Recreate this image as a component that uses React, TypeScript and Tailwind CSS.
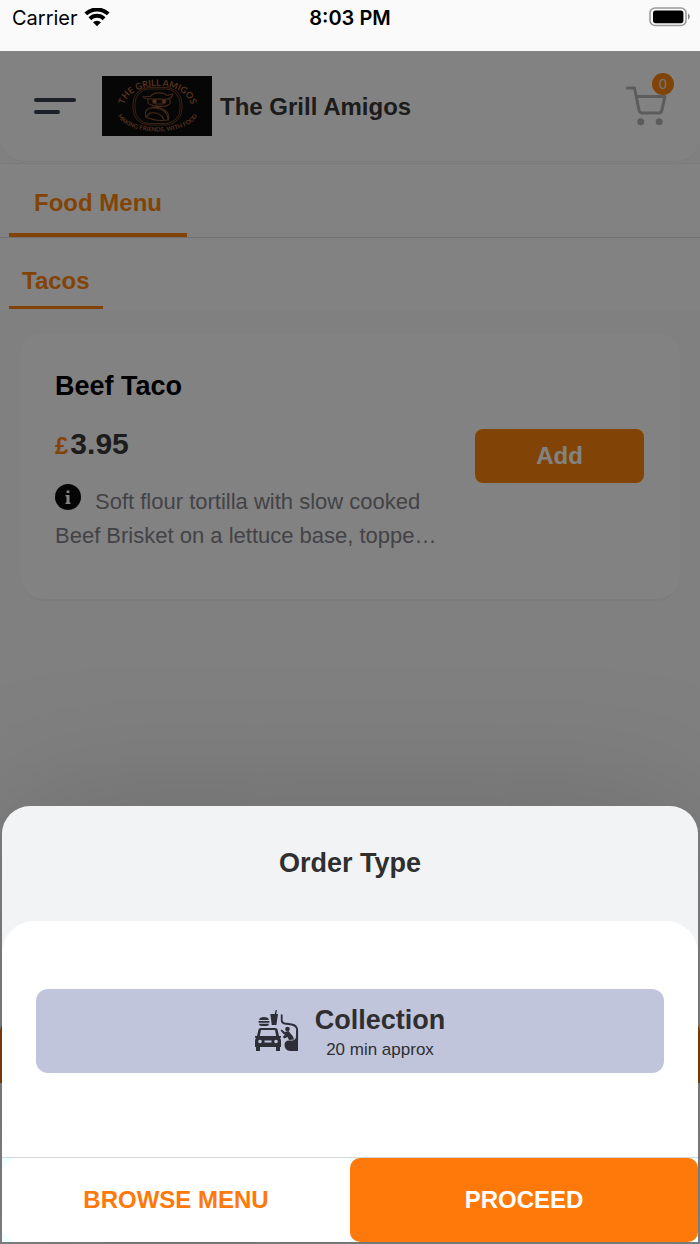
import { useState } from "react";

const sans = "font-['Liberation_Sans',Arial,sans-serif]";

function StatusBar() {
  return (
    <div className="grid h-[51px] grid-cols-3 items-start bg-[#fafafa] px-2.5 pt-1 font-['Inter',sans-serif] text-xl text-black">
      <div className="flex items-center gap-1.5 pl-0.5">
        <span>Carrier</span>
        <svg viewBox="0 0 26 20" className="h-5 w-[26px]" aria-hidden="true">
          <g fill="none" stroke="#000" strokeWidth="4">
            <path d="M1.8 5.900A16.400 16.400 0 0 1 24.200 5.900" />
            <path d="M5.900 10.700A10.200 10.200 0 0 1 20.100 10.700" />
          </g>
          <path d="M13 18.300 9 14.300A5.800 5.800 0 0 1 17 14.300Z" />
        </svg>
      </div>
      <div className="text-center font-semibold">8:03 PM</div>
      <div className="flex justify-end pt-[3px]">
        <svg viewBox="0 0 41 20" className="h-5 w-[41px]" aria-hidden="true">
          <rect x="1" y="1" width="36" height="17.500" rx="5" fill="none" stroke="#9b9b9b" strokeWidth="1.6" />
          <rect x="4" y="3.600" width="30.400" height="12.600" rx="2.6" />
          <path d="M39 6.500c2.400 1 2.400 5 0 6z" fill="#8b8b8b" />
        </svg>
      </div>
    </div>
  );
}

function Logo() {
  return (
    <svg viewBox="0 0 110 60" className="h-[60px] w-[110px] shrink-0" role="img" aria-label="The Grill Amigos logo">
      <rect width="110" height="60" fill="#0c0c0c" />
      <defs>
        <path id="logo-top" d="M22 31A33.500 21 0 0 1 89 31" />
        <path id="logo-bottom" d="M15 36A40.500 19.500 0 0 0 96 36" />
      </defs>
      <g fill="#a5603a" className="font-['Lato',sans-serif]">
        <text fontSize="9" fontWeight="700">
          <textPath href="#logo-top" startOffset="50%" textAnchor="middle">
            THE GRILL AMIGOS
          </textPath>
        </text>
        <text fontSize="6" fontWeight="700">
          <textPath href="#logo-bottom" startOffset="50%" textAnchor="middle">
            MAKING FRIENDS, WITH FOOD
          </textPath>
        </text>
      </g>
      <g fill="none" stroke="#8a5233" strokeWidth="0.8">
        <rect x="31" y="11.500" width="49" height="37.500" rx="16" />
        <rect x="33" y="13" width="45" height="34.500" rx="14.500" />
        <g strokeWidth="1.100">
          <path d="M41 21c3-1 6 0 8-1 2-4 14-4 15-1 2 1 4-1 7-1-1 4-5 6-11 5-8 0-17 1-19-2z" />
          <path d="M46 23c-1 4 1 6 4 6 2 2 14 2 16 0 3-1 3-4 1-7" />
          <path d="M44 41c-2-7 2-10 9-9 8 1 13 5 13 12-7 1-16 0-22-3z" />
          <path d="M49 32c7-2 17 1 18 9l-1 3M44 41l4-4c7-1 12 2 14 7" />
          <path d="M53 28h8M55 31v-2M58 31v-2" />
        </g>
        <circle cx="52.500" cy="25.500" r="2" fill="#a5603a" />
        <circle cx="62" cy="25.500" r="2" fill="#a5603a" />
      </g>
    </svg>
  );
}

function Header() {
  return (
    <header className="border-b border-[#f2f2f2] pb-px">
      <div className="flex h-[111px] items-center rounded-b-3xl border-b border-[#f2f2f2] bg-white px-8">
        <button type="button" aria-label="Open menu" className="ml-0.5 flex w-[42px] flex-col gap-2">
          <span className="h-1 w-[42px] rounded-full bg-[#3a3f51]" />
          <span className="h-1 w-[26px] rounded-full bg-[#3a3f51]" />
        </button>
        <div className="ml-[26px] flex items-center gap-2">
          <Logo />
          <h1 className="pt-px text-2xl font-bold text-[#383838]">The Grill Amigos</h1>
        </div>
        <button type="button" aria-label="Basket, 0 items" className="relative ml-auto">
          <svg viewBox="0 0 42 42" className="h-[42px] w-[42px]" aria-hidden="true">
            <path
              d="M1.500 3H8.500l4.500 22.300q.6 2.700 3.400 2.700h15.800q3 0 3.600-2.700L39 11.500H10.500"
              fill="none"
              stroke="#b4b4b4"
              strokeWidth="3"
              strokeLinecap="round"
              strokeLinejoin="round"
            />
            <circle cx="14.700" cy="36.700" r="3.500" fill="#b4b4b4" />
            <circle cx="33.200" cy="36.700" r="3.500" fill="#b4b4b4" />
          </svg>
          <span className="absolute -top-3 -right-1.5 flex size-[22px] items-center justify-center rounded-full bg-[#ff860c] text-sm text-[#e5e5e5]">
            0
          </span>
        </button>
      </div>
    </header>
  );
}

function Tabs() {
  return (
    <nav aria-label="Menu sections" className="bg-white text-2xl font-bold text-[#ff860c]">
      <div className="flex h-[74px] items-stretch border-b border-[#dadada] pl-[9px]">
        <a href="#food-menu" className="border-b-4 border-[#ff860c] px-[25px] pt-[23px]">
          Food Menu
        </a>
      </div>
      <div className="flex h-[71px] items-stretch pl-[9px]">
        <a href="#tacos" className="border-b-[3px] border-[#ff860c] px-[13px] pt-[27px]">
          Tacos
        </a>
      </div>
    </nav>
  );
}

function MenuItem() {
  return (
    <article className="mx-5 mt-6 flex items-start justify-between rounded-3xl border-b-2 border-[#f4f4f4] bg-white px-[35px] pt-[35px] pb-[46px]">
      <div className="w-[390px]">
        <h2 className="text-[27px] leading-9 font-bold text-black">Beef Taco</h2>
        <p className="mt-[22px] text-[30px] leading-9 font-bold text-[#383838]">
          <span className="mr-0.5 text-2xl text-[#ff860c]">£</span>3.95
        </p>
        <p className="mt-[22px] text-[22px] leading-[34px] text-[#84848c]">
          <button type="button" aria-label="Item details" className="mr-3.5 align-[-1px]">
            <svg viewBox="0 0 26 26" className="size-[26px]" aria-hidden="true">
              <circle cx="13" cy="13" r="13" fill="#0a0a0a" />
              <path d="M10.500 11h4v7.500h1V20h-5v-1.500h1v-6h-1zM11.600 6.500h2.800v2.600h-2.800z" fill="#fff" />
            </svg>
          </button>
          Soft flour tortilla with slow cooked Beef Brisket on a lettuce base, toppe…
        </p>
      </div>
      <button
        type="button"
        className="mt-[61px] mr-px h-[54px] w-[169px] rounded-lg bg-[#ff860c] text-2xl font-bold text-white"
      >
        Add
      </button>
    </article>
  );
}

function CollectionIcon() {
  return (
    <svg viewBox="0 0 44 42" className="h-[42px] w-11" fill="#2d2e36" aria-hidden="true">
      {/* burger and drink */}
      <path d="M4 10q.5-3 5-3t5 3zM3.600 11h10.800v1.700H3.600zM4 13.700h10q0 2.300-2.500 2.300h-5Q4 16 4 13.700z" />
      <path d="M15.300 4h4.400l1-4 1.300.3-.8 3.700h1.800l-1.600 11h-4.600z" />
      {/* car */}
      <path
        fillRule="evenodd"
        d="M5.500 18h15q1.500 0 2 1.500l1.500 6.500h2v1.500l-1 .5q1 1 1 3V37h-1v4h-4v-4H5v4H1v-4H0v-6q0-2 1-3l-1-.5V26h2l1.500-6.500Q4 18 5.500 18zM6 20l-1.200 6h16.400L20 20zM5 29.700a1.800 1.800 0 1 0 0 3.600 1.800 1.800 0 0 0 0-3.600zM21 29.700a1.800 1.800 0 1 0 0 3.600 1.800 1.800 0 0 0 0-3.600zM9.500 30.500v2h7v-2z"
      />
      {/* server at the window */}
      <path d="M26.700 4.500V10q0 3 3 3.500l7 1q5.500 1 5.500 6v9" fill="none" stroke="#2d2e36" strokeWidth="1.800" />
      <circle cx="32.500" cy="19" r="2.300" />
      <path d="m25.500 20.500 1.200-1 3 2.500 3.800-1 4.500 5.500 1 3-5 .5-1.500-3-3 1.500-1.800-1.500 2.300-2.500-1.500-.5z" />
      <path d="M43 20v21H35.500q-6-.5-6-6 0-4.500 4.500-4.500h4q3-1 3-4.500V20z" />
    </svg>
  );
}

function OrderTypeSheet({ onClose }: { onClose: () => void }) {
  const [selected, setSelected] = useState("collection");

  return (
    <section
      role="dialog"
      aria-labelledby="order-type-title"
      className="absolute inset-x-0.5 bottom-0.5 overflow-hidden rounded-t-[28px] bg-[#f2f3f5] shadow-[0_0_150px_rgba(0,0,0,0.16)]"
    >
      <h2
        id="order-type-title"
        className="flex h-[115px] items-center justify-center text-[27px] font-bold text-[#2f2f2f]"
      >
        Order Type
      </h2>
      <div className="rounded-t-[32px] bg-white px-[34px] pt-[68px] pb-[84px]">
        <button
          type="button"
          aria-pressed={selected === "collection"}
          onClick={() => setSelected("collection")}
          className="flex h-[84px] w-full items-center justify-center gap-4 rounded-xl bg-[#c0c5dc] text-[#2f2f2f]"
        >
          <CollectionIcon />
          <span className="flex flex-col items-center gap-0.5 pt-1">
            <span className="text-[27px] leading-8 font-bold">Collection</span>
            <span className="text-[17px] leading-6">20 min approx</span>
          </span>
        </button>
      </div>
      <div className="grid grid-cols-2 border-t border-[#d5d8d9] bg-[#edffff] text-2xl font-bold">
        <button type="button" onClick={onClose} className="h-[84px] rounded-l-2xl bg-white text-[#ff780a]">
          BROWSE MENU
        </button>
        <button type="button" className="h-[84px] rounded-[10px] bg-[#ff780a] text-white">
          PROCEED
        </button>
      </div>
    </section>
  );
}

export default function App() {
  const [open, setOpen] = useState(true);

  return (
    <div className={`flex min-h-screen flex-col ${sans}`}>
      <StatusBar />
      <main className="relative flex flex-1 flex-col bg-[#fbfbfb]">
        <Header />
        <Tabs />
        <MenuItem />
        <button
          type="button"
          aria-label="View basket"
          className="mt-auto mb-[161px] h-[60px] w-full rounded-t-lg bg-[#ff780a]"
        />
        {open && (
          <>
            <div className="absolute inset-0 bg-black/49" />
            <OrderTypeSheet onClose={() => setOpen(false)} />
          </>
        )}
      </main>
    </div>
  );
}
